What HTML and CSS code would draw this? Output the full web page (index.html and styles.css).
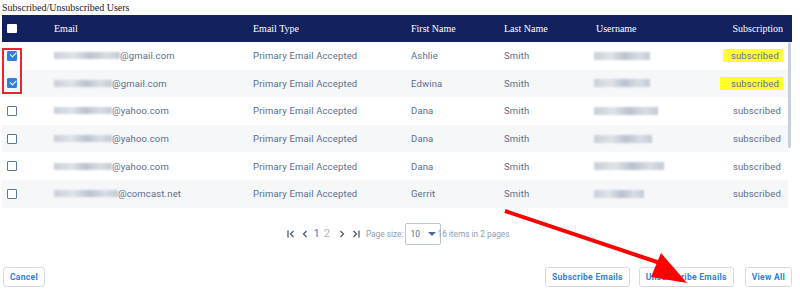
FILE: index.html
```html
<!DOCTYPE html>
<html lang="en">
<head>
    <meta charset="UTF-8">
    <title>Subscribed/Unsubscribed Users</title>
    <link rel="stylesheet" href="styles.css">
</head>
<body>

    <div class="page">
        <div class="title">Subscribed/Unsubscribed Users</div>

        <!-- Users grid -->
        <div class="grid">
            <div class="grid-head">
                <div class="cell check"><span class="box head-box"></span></div>
                <div class="cell">Email</div>
                <div class="cell">Email Type</div>
                <div class="cell">First Name</div>
                <div class="cell">Last Name</div>
                <div class="cell">Username</div>
                <div class="cell right">Subscription</div>
            </div>

            <div class="grid-body">
                <div class="rows">
                    <div class="row">
                        <div class="cell check"><span class="box checked"></span></div>
                        <div class="cell"><span class="blur" style="width:66px"></span>@gmail.com</div>
                        <div class="cell">Primary Email Accepted</div>
                        <div class="cell">Ashlie</div>
                        <div class="cell">Smith</div>
                        <div class="cell"><span class="blur user" style="width:56px"></span></div>
                        <div class="cell right"><span class="mark">subscribed</span></div>
                    </div>
                    <div class="row alt">
                        <div class="cell check"><span class="box checked"></span></div>
                        <div class="cell"><span class="blur" style="width:58px"></span>@gmail.com</div>
                        <div class="cell">Primary Email Accepted</div>
                        <div class="cell">Edwina</div>
                        <div class="cell">Smith</div>
                        <div class="cell"><span class="blur user" style="width:56px"></span></div>
                        <div class="cell right"><span class="mark wide">subscribed</span></div>
                    </div>
                    <div class="row">
                        <div class="cell check"><span class="box"></span></div>
                        <div class="cell"><span class="blur" style="width:58px"></span>@yahoo.com</div>
                        <div class="cell">Primary Email Accepted</div>
                        <div class="cell">Dana</div>
                        <div class="cell">Smith</div>
                        <div class="cell"><span class="blur user" style="width:64px"></span></div>
                        <div class="cell right">subscribed</div>
                    </div>
                    <div class="row alt">
                        <div class="cell check"><span class="box"></span></div>
                        <div class="cell"><span class="blur" style="width:58px"></span>@yahoo.com</div>
                        <div class="cell">Primary Email Accepted</div>
                        <div class="cell">Dana</div>
                        <div class="cell">Smith</div>
                        <div class="cell"><span class="blur user" style="width:58px"></span></div>
                        <div class="cell right">subscribed</div>
                    </div>
                    <div class="row">
                        <div class="cell check"><span class="box"></span></div>
                        <div class="cell"><span class="blur" style="width:58px"></span>@yahoo.com</div>
                        <div class="cell">Primary Email Accepted</div>
                        <div class="cell">Dana</div>
                        <div class="cell">Smith</div>
                        <div class="cell"><span class="blur user" style="width:70px"></span></div>
                        <div class="cell right">subscribed</div>
                    </div>
                    <div class="row alt">
                        <div class="cell check"><span class="box"></span></div>
                        <div class="cell"><span class="blur" style="width:64px"></span>@comcast.net</div>
                        <div class="cell">Primary Email Accepted</div>
                        <div class="cell">Gerrit</div>
                        <div class="cell">Smith</div>
                        <div class="cell"><span class="blur user" style="width:50px"></span></div>
                        <div class="cell right">subscribed</div>
                    </div>
                </div>
                <div class="scrollbar"><div class="thumb"></div></div>
            </div>

            <!-- red box round the two checked rows -->
            <div class="callout"></div>
        </div>

        <!-- Pager -->
        <div class="pager">
            <svg class="nav" width="8" height="8" viewBox="0 0 8 8"><path d="M1 0.5v7M6.5 1L3.5 4l3 3" fill="none" stroke="#4b5a73" stroke-width="1.3"/></svg>
            <svg class="nav" width="6" height="8" viewBox="0 0 6 8"><path d="M4.5 1L1.5 4l3 3" fill="none" stroke="#4b5a73" stroke-width="1.3"/></svg>
            <span class="num current">1</span>
            <span class="num">2</span>
            <svg class="nav next" width="6" height="8" viewBox="0 0 6 8"><path d="M1.5 1l3 3-3 3" fill="none" stroke="#4b5a73" stroke-width="1.3"/></svg>
            <svg class="nav last" width="8" height="8" viewBox="0 0 8 8"><path d="M1.5 1l3 3-3 3M7 0.5v7" fill="none" stroke="#4b5a73" stroke-width="1.3"/></svg>
            <span class="label">Page size:</span>
            <span class="size">10 <span class="caret"></span></span>
            <span class="info">16 items in 2 pages</span>
        </div>

        <!-- Actions -->
        <div class="actions">
            <button class="btn">Cancel</button>
            <div class="actions-right">
                <button class="btn">Subscribe Emails</button>
                <button class="btn">Unsubscribe Emails</button>
                <button class="btn">View All</button>
            </div>
        </div>

        <!-- Red arrow pointing at Unsubscribe -->
        <svg class="arrow" width="800" height="297" viewBox="0 0 800 297">
            <line x1="505" y1="211" x2="666" y2="265" stroke="#f00" stroke-width="4"/>
            <polygon points="687,283 661,253 651,277" fill="#f00"/>
        </svg>
    </div>

</body>
</html>
```

FILE: styles.css
```css
* {
    margin: 0;
    padding: 0;
    box-sizing: border-box;
}

body {
    font-family: 'Roboto', 'Inter', sans-serif;
    background-color: #fff;
    width: 800px;
    height: 297px;
    overflow: hidden;
}

.page {
    position: relative;
    padding: 0 8px 0 2px;
    height: 297px;
}

.title {
    font-family: 'Liberation Serif', serif;
    font-size: 10px;
    color: #222;
    height: 15px;
    line-height: 14px;
    padding-top: 1px;
}

/* Grid */
.grid {
    position: relative;
    width: 790px;
}

.grid-head,
.row {
    display: grid;
    grid-template-columns: 42px 199px 158px 93px 92px 110px 1fr;
    align-items: center;
}

.grid-head {
    background-color: #13215f;
    color: #fff;
    font-family: 'Liberation Serif', serif;
    font-size: 10px;
    height: 27px;
    padding-right: 9px;
}

.cell {
    padding-left: 10px;
    white-space: nowrap;
    display: flex;
    align-items: center;
}

.cell.check {
    padding-left: 5px;
}

.cell.right {
    justify-content: flex-end;
    padding-right: 7px;
}

.grid-head .cell.right {
    padding-right: 0;
}

.grid-body {
    display: flex;
}

.rows {
    width: 786px;
}

.row {
    height: 27.6px;
    font-size: 9.5px;
    color: #5a6d8c;
    letter-spacing: 0.15px;
    background-color: #fff;
}

.row.alt {
    background-color: #f6f7f9;
}

.scrollbar {
    width: 4px;
}

.thumb {
    width: 3px;
    height: 106px;
    background-color: #c7cfda;
    border-radius: 2px;
}

/* Checkboxes */
.box {
    display: inline-block;
    width: 10px;
    height: 10px;
    border: 1.5px solid #5b77a0;
    border-radius: 1px;
    background-color: #fff;
    position: relative;
}

.head-box {
    border: none;
    width: 10px;
    height: 9px;
}

.box.checked {
    background-color: #2f7fe0;
    border-color: #2f7fe0;
}

.box.checked::after {
    content: '';
    position: absolute;
    left: 1.5px;
    top: 0.5px;
    width: 5px;
    height: 2.5px;
    border-left: 1.3px solid #fff;
    border-bottom: 1.3px solid #fff;
    transform: rotate(-45deg);
}

/* Blurred private bits */
.blur {
    display: inline-block;
    height: 7px;
    background: linear-gradient(90deg, #c9cfd8, #dfe3e9 30%, #b9c2ce 55%, #d8dde4 80%, #c3cad4);
    filter: blur(1px);
}

.blur.user {
    height: 8px;
    margin-left: -2px;
}

.mark {
    background-color: #ffff33;
    padding: 1px 4px 1px 8px;
    margin-right: -2px;
}

.mark.wide {
    padding-left: 11px;
}

.callout {
    position: absolute;
    left: 0;
    top: 33px;
    width: 20px;
    height: 46px;
    border: 2px solid #e8262b;
}

/* Pager */
.pager {
    display: flex;
    align-items: center;
    justify-content: center;
    height: 22px;
    margin-top: 15px;
    font-size: 8.3px;
    color: #8d9bb3;
    padding-left: 2px;
}

.nav {
    margin-right: 7px;
}

.nav.next {
    margin-left: 5px;
}

.nav.last {
    margin-right: 5px;
}

.num {
    font-size: 11px;
    margin-right: 4px;
    color: #aab5c8;
}

.num.current {
    color: #2f7fe0;
    margin-left: -1px;
    margin-right: 4px;
}

.label {
    margin-left: 1px;
    margin-right: 2px;
}

.size {
    display: flex;
    align-items: center;
    justify-content: space-between;
    width: 36px;
    height: 22px;
    border: 1px solid #b9c4d4;
    border-radius: 2px;
    padding: 0 4px 0 4px;
    color: #5a6d8c;
    font-size: 8.5px;
}

.caret {
    width: 0;
    height: 0;
    border-left: 4px solid transparent;
    border-right: 4px solid transparent;
    border-top: 4px solid #4b6a96;
}

.info {
    margin-left: -4px;
}

/* Buttons */
.actions {
    display: flex;
    justify-content: space-between;
    margin-top: 22px;
    width: 790px;
    padding-left: 1px;
}

.actions-right {
    display: flex;
    gap: 9px;
}

.btn {
    font-family: 'Roboto', 'Inter', sans-serif;
    font-size: 8.5px;
    font-weight: 700;
    letter-spacing: 0.3px;
    color: #2f7fe0;
    background-color: #fff;
    border: 1px solid #d3dae5;
    border-radius: 3px;
    height: 20px;
    padding: 0 6px;
}

.actions-right .btn:nth-child(2) {
    padding: 0 6px;
}

.actions-right .btn:last-child {
    margin-left: 2px;
}

.arrow {
    position: absolute;
    left: 0;
    top: 0;
    pointer-events: none;
}
```
